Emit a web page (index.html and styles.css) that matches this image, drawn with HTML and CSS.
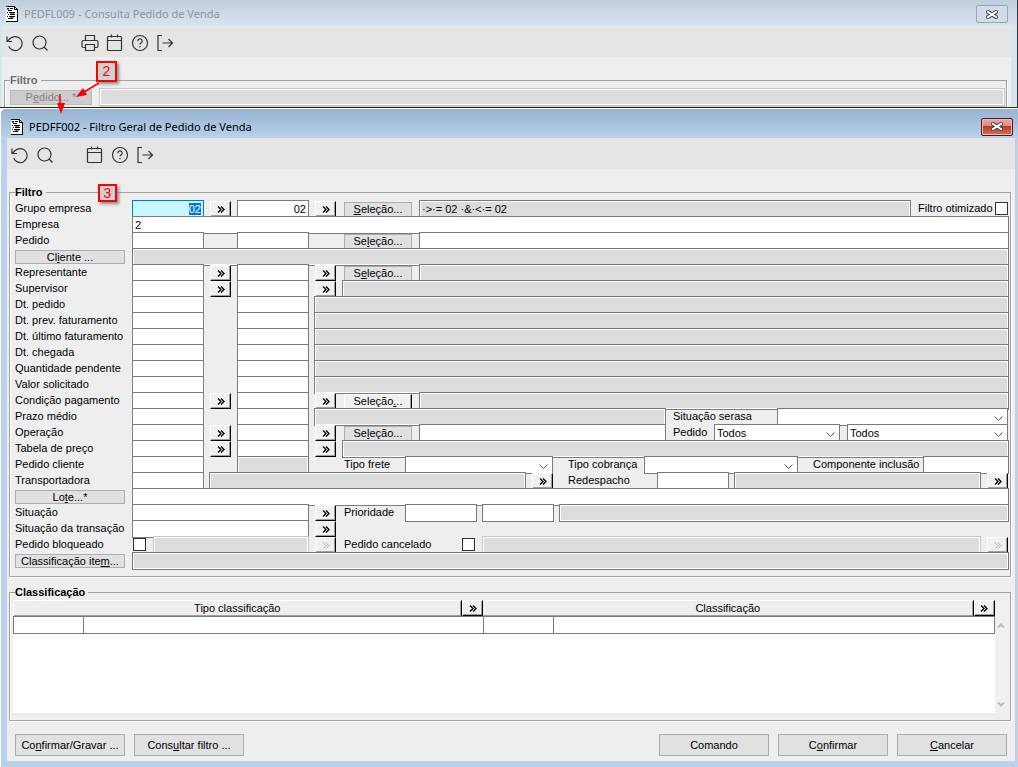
FILE: index.html
```html
<!DOCTYPE html>
<html lang="pt-BR">
<head>
  <meta charset="UTF-8">
  <meta name="viewport" content="width=device-width, initial-scale=1.0">
  <title>PEDFF002 - Filtro Geral de Pedido de Venda</title>
  <link rel="stylesheet" href="styles.css">
</head>
<body>
  <!-- icons -->
  <svg class="sprite" aria-hidden="true">
    <symbol id="i-doc" viewBox="0 0 12 16">
      <path d="M0 0h9l3 3v13H0z" fill="#fff"/>
      <path d="M0 15h12v1H0zM11 3h1v13h-1zM8 0h1v3H8zM8 3h4v1H8zM9 1h1v1H9zM10 2h1v1h-1zM0 0h9v1H0z" fill="#000"/>
      <path d="M1 2h2v1H1zM4 2h3v1H4zM2 4h4v1H2zM1 6h1v1H1zM3 6h6v1H3zM2 8h1v1H2zM4 8h5v1H4zM1 10h1v1H1zM3 10h6v1H3zM2 12h5v1H2z" fill="#000"/>
      <path d="M1 3h2v1H1zM4 7h4v1H4zM4 11h4v1H4z" fill="#777"/>
    </symbol>
    <symbol id="i-undo" viewBox="0 0 18 18"><path d="M1 2.500v5h5M1 7.500l3.500-3.200a7 7 0 1 1-1.800 8"/></symbol>
    <symbol id="i-search" viewBox="0 0 18 18"><circle cx="8.500" cy="8.500" r="6.500"/><path d="M13 13l3.500 3.500"/></symbol>
    <symbol id="i-print" viewBox="0 0 18 18"><path d="M4.500 6.500v-5h9v5M4.500 13.500h-2a1.500 1.500 0 0 1-1.500-1.500V8a1.500 1.500 0 0 1 1.500-1.500h13A1.500 1.500 0 0 1 17 8v4a1.500 1.500 0 0 1-1.500 1.500h-2M4.500 10.500h9v6h-9z"/></symbol>
    <symbol id="i-cal" viewBox="0 0 18 18"><rect x="1.500" y="2.500" width="14" height="14" rx="1"/><path d="M1.500 6.500h14M5.500 .5v3M11.500 .5v3"/></symbol>
    <symbol id="i-help" viewBox="0 0 18 18"><circle cx="9" cy="9" r="7.500"/><path d="M6.800 7.200a2.200 2.200 0 1 1 3.300 1.700q-1.100 .6-1.100 1.600M9 12v1.200"/></symbol>
    <symbol id="i-exit" viewBox="0 0 18 18"><path d="M6 1.500H2v15h4M6.500 9h10M12.500 5l4 4-4 4"/></symbol>
    <symbol id="i-more" viewBox="0 0 8 7"><path d="M1 .5l3 3-3 3M4 .5l3 3-3 3"/></symbol>
    <symbol id="i-close" viewBox="0 0 12 9"><path d="M2 2l8 5M10 2l-8 5" stroke="#41454f" stroke-width="4" stroke-linecap="square"/><path d="M2 2l8 5M10 2l-8 5" stroke="#fff" stroke-width="2" stroke-linecap="square"/></symbol>
  </svg>

  <!-- back window -->
  <section class="win win-back">
    <header class="titlebar">
      <svg class="doc"><use href="#i-doc"/></svg>
      <h1>PEDFL009 - Consulta Pedido de Venda</h1>
      <button class="close" aria-label="Fechar"><svg><use href="#i-close"/></svg></button>
    </header>
    <div class="client">
      <nav class="toolbar">
        <button aria-label="Desfazer"><svg><use href="#i-undo"/></svg></button>
        <button aria-label="Pesquisar"><svg><use href="#i-search"/></svg></button>
        <button class="apart" aria-label="Imprimir"><svg><use href="#i-print"/></svg></button>
        <button aria-label="Agenda"><svg><use href="#i-cal"/></svg></button>
        <button aria-label="Ajuda"><svg><use href="#i-help"/></svg></button>
        <button aria-label="Sair"><svg><use href="#i-exit"/></svg></button>
      </nav>
      <fieldset class="group">
        <legend>Filtro</legend>
        <div class="row">
          <button class="btn btn-back" disabled>P<u>e</u>dido... *</button>
          <input class="ro soft grow" readonly aria-label="Pedido">
        </div>
        <div class="row strip"><span></span><span></span><span></span><span></span></div>
      </fieldset>
    </div>
  </section>

  <!-- front window -->
  <section class="win win-front">
    <header class="titlebar">
      <svg class="doc"><use href="#i-doc"/></svg>
      <h1>PEDFF002 - Filtro Geral de Pedido de Venda</h1>
      <button class="close" aria-label="Fechar"><svg><use href="#i-close"/></svg></button>
    </header>
    <div class="client">
      <nav class="toolbar">
        <button aria-label="Desfazer"><svg><use href="#i-undo"/></svg></button>
        <button aria-label="Pesquisar"><svg><use href="#i-search"/></svg></button>
        <button class="apart" aria-label="Agenda"><svg><use href="#i-cal"/></svg></button>
        <button aria-label="Ajuda"><svg><use href="#i-help"/></svg></button>
        <button aria-label="Sair"><svg><use href="#i-exit"/></svg></button>
      </nav>

      <form>
        <fieldset class="group">
          <legend>Filtro</legend>

          <div class="row">
            <label class="name" for="grupo">Grupo empresa</label>
            <input class="num focused" id="grupo" value="02">
            <span class="slot"><button type="button" class="more" aria-label="Buscar"><svg><use href="#i-more"/></svg></button></span>
            <input class="num" value="02" aria-label="Grupo empresa até">
            <span class="slot"><button type="button" class="more" aria-label="Buscar"><svg><use href="#i-more"/></svg></button></span>
            <span class="pick"><button type="button" class="btn"><u>S</u>eleção...</button></span>
            <input class="ro grow" readonly value="·&gt;·= 02 ·&amp;·&lt;·= 02" aria-label="Seleção de grupo">
            <label class="check" for="otim">Filtro otimizado</label>
            <input type="checkbox" id="otim">
          </div>
          <div class="row">
            <label class="name" for="empresa">Empresa</label>
            <input class="grow" id="empresa" value="2">
          </div>
          <div class="row">
            <label class="name" for="pedido">Pedido</label>
            <input class="num" id="pedido"><span class="slot"></span>
            <input class="num" aria-label="Pedido até"><span class="slot"></span>
            <span class="pick"><button type="button" class="btn">Se<u>l</u>eção...</button></span>
            <input class="grow" aria-label="Seleção de pedido">
          </div>
          <div class="row">
            <span class="name"><button type="button" class="btn">Cl<u>i</u>ente ...</button></span>
            <input class="ro grow" readonly aria-label="Cliente">
          </div>
          <div class="row">
            <label class="name" for="repr">Representante</label>
            <input class="num" id="repr">
            <span class="slot"><button type="button" class="more" aria-label="Buscar"><svg><use href="#i-more"/></svg></button></span>
            <input class="num" aria-label="Representante até">
            <span class="slot"><button type="button" class="more" aria-label="Buscar"><svg><use href="#i-more"/></svg></button></span>
            <span class="pick"><button type="button" class="btn">S<u>e</u>leção...</button></span>
            <input class="ro grow" readonly aria-label="Seleção de representante">
          </div>
          <div class="row">
            <label class="name" for="superv">Supervisor</label>
            <input class="num" id="superv">
            <span class="slot"><button type="button" class="more" aria-label="Buscar"><svg><use href="#i-more"/></svg></button></span>
            <input class="num" aria-label="Supervisor até">
            <span class="slot"><button type="button" class="more" aria-label="Buscar"><svg><use href="#i-more"/></svg></button></span>
            <input class="ro grow" readonly aria-label="Nome do supervisor">
          </div>
          <div class="row">
            <label class="name" for="dtped">Dt. pedido</label>
            <input class="num" id="dtped"><span class="slot"></span>
            <input class="num" aria-label="Dt. pedido até"><input class="ro grow wide" readonly aria-label="Período">
          </div>
          <div class="row">
            <label class="name" for="dtprev">Dt. prev. faturamento</label>
            <input class="num" id="dtprev"><span class="slot"></span>
            <input class="num" aria-label="Dt. prev. faturamento até"><input class="ro grow wide" readonly aria-label="Período">
          </div>
          <div class="row">
            <label class="name" for="dtult">Dt. último faturamento</label>
            <input class="num" id="dtult"><span class="slot"></span>
            <input class="num" aria-label="Dt. último faturamento até"><input class="ro grow wide" readonly aria-label="Período">
          </div>
          <div class="row">
            <label class="name" for="dtcheg">Dt. chegada</label>
            <input class="num" id="dtcheg"><span class="slot"></span>
            <input class="num" aria-label="Dt. chegada até"><input class="ro grow wide" readonly aria-label="Período">
          </div>
          <div class="row">
            <label class="name" for="qtd">Quantidade pendente</label>
            <input class="num" id="qtd"><span class="slot"></span>
            <input class="num" aria-label="Quantidade até"><input class="ro grow wide" readonly aria-label="Faixa">
          </div>
          <div class="row">
            <label class="name" for="valor">Valor solicitado</label>
            <input class="num" id="valor"><span class="slot"></span>
            <input class="num" aria-label="Valor até"><input class="ro grow wide" readonly aria-label="Faixa">
          </div>
          <div class="row">
            <label class="name" for="cond">Condição pagamento</label>
            <input class="num" id="cond">
            <span class="slot"><button type="button" class="more" aria-label="Buscar"><svg><use href="#i-more"/></svg></button></span>
            <input class="num" aria-label="Condição até">
            <span class="slot"><button type="button" class="more" aria-label="Buscar"><svg><use href="#i-more"/></svg></button></span>
            <span class="pick"><button type="button" class="btn raised">Seleção<u>.</u>..</button></span>
            <input class="ro grow" readonly aria-label="Seleção de condição">
          </div>
          <div class="row">
            <label class="name" for="prazo">Prazo médio</label>
            <input class="num" id="prazo"><span class="slot"></span>
            <input class="num" aria-label="Prazo até"><input class="ro grow wide" readonly aria-label="Faixa">
            <div class="side">
              <label class="lead serasa" for="serasa">Situação serasa</label>
              <select class="grow" id="serasa"><option></option></select>
            </div>
          </div>
          <div class="row">
            <label class="name" for="oper">Operação</label>
            <input class="num" id="oper">
            <span class="slot"><button type="button" class="more" aria-label="Buscar"><svg><use href="#i-more"/></svg></button></span>
            <input class="num" aria-label="Operação até">
            <span class="slot"><button type="button" class="more" aria-label="Buscar"><svg><use href="#i-more"/></svg></button></span>
            <span class="pick"><button type="button" class="btn">Se<u>l</u>eção...</button></span>
            <input class="grow" aria-label="Seleção de operação">
            <div class="side">
              <label class="lead ped" for="tipoped">Pedido</label>
              <select class="ped-a" id="tipoped"><option>Todos</option></select>
              <select class="grow gap" aria-label="Situação do pedido"><option>Todos</option></select>
            </div>
          </div>
          <div class="row">
            <label class="name" for="tabela">Tabela de preço</label>
            <input class="num" id="tabela">
            <span class="slot"><button type="button" class="more" aria-label="Buscar"><svg><use href="#i-more"/></svg></button></span>
            <input class="num" aria-label="Tabela até">
            <span class="slot"><button type="button" class="more" aria-label="Buscar"><svg><use href="#i-more"/></svg></button></span>
            <input class="ro grow" readonly aria-label="Nome da tabela">
          </div>
          <div class="row">
            <label class="name" for="pedcli">Pedido cliente</label>
            <input class="num" id="pedcli"><span class="slot"></span>
            <input class="num ro" readonly aria-label="Pedido cliente até"><span class="slot"></span>
            <label class="mid" for="frete">Tipo frete</label>
            <select class="frete" id="frete"><option></option></select>
            <label class="lead cobr" for="cobr">Tipo cobrança</label>
            <select class="grow" id="cobr"><option></option></select>
            <label class="lead comp" for="comp">Componente inclusão</label>
            <input class="comp-in" id="comp">
          </div>
          <div class="row">
            <label class="name" for="transp">Transportadora</label>
            <input class="num" id="transp">
            <input class="ro wide transp" readonly aria-label="Nome da transportadora">
            <span class="slot"><button type="button" class="more" aria-label="Buscar"><svg><use href="#i-more"/></svg></button></span>
            <label class="redesp" for="redesp">Redespacho</label>
            <input class="num" id="redesp">
            <input class="ro grow wide" readonly aria-label="Nome do redespacho">
            <span class="end"><button type="button" class="more" aria-label="Buscar"><svg><use href="#i-more"/></svg></button></span>
          </div>
          <div class="row">
            <span class="name"><button type="button" class="btn">Lo<u>t</u>e...*</button></span>
            <input class="grow" aria-label="Lote">
          </div>
          <div class="row">
            <label class="name" for="sit">Situação</label>
            <input class="double" id="sit">
            <span class="slot"><button type="button" class="more" aria-label="Buscar"><svg><use href="#i-more"/></svg></button></span>
            <label class="mid" for="prio">Prioridade</label>
            <input class="num" id="prio">
            <input class="num wide" aria-label="Prioridade até">
            <input class="ro grow wide" readonly aria-label="Faixa de prioridade">
          </div>
          <div class="row">
            <label class="name" for="sittr">Situação da transação</label>
            <input class="double" id="sittr">
            <span class="slot"><button type="button" class="more" aria-label="Buscar"><svg><use href="#i-more"/></svg></button></span>
          </div>
          <div class="row">
            <label class="name" for="bloq">Pedido bloqueado</label>
            <span class="tick"><input type="checkbox" id="bloq"></span>
            <input class="ro soft bloq" readonly aria-label="Motivo do bloqueio">
            <span class="slot"><button type="button" class="more" disabled aria-label="Buscar"><svg><use href="#i-more"/></svg></button></span>
            <label class="cancel" for="canc">Pedido cancelado</label>
            <span class="tick"><input type="checkbox" id="canc"></span>
            <input class="ro soft grow" readonly aria-label="Motivo do cancelamento">
            <span class="end"><button type="button" class="more" disabled aria-label="Buscar"><svg><use href="#i-more"/></svg></button></span>
          </div>
          <div class="row">
            <span class="name"><button type="button" class="btn">Classificação ite<u>m</u>...</button></span>
            <input class="ro grow" readonly aria-label="Classificação item">
          </div>
        </fieldset>

        <fieldset class="group classes">
          <legend>Classificação</legend>
          <div class="list">
            <table>
              <colgroup><col class="c-code"><col><col class="c-code"><col class="c-desc"></colgroup>
              <thead>
                <tr>
                  <th colspan="2"><div class="head"><span>Tipo classificação</span><button type="button" class="more" aria-label="Buscar"><svg><use href="#i-more"/></svg></button></div></th>
                  <th colspan="2"><div class="head"><span>Classificação</span><button type="button" class="more" aria-label="Buscar"><svg><use href="#i-more"/></svg></button></div></th>
                </tr>
              </thead>
              <tbody>
                <tr><td></td><td></td><td></td><td></td></tr>
              </tbody>
            </table>
            <div class="scroll">
              <svg viewBox="0 0 8 5"><path d="M1 4.500l3-3 3 3"/></svg>
              <svg viewBox="0 0 8 5"><path d="M1 .5l3 3 3-3"/></svg>
            </div>
          </div>
        </fieldset>

        <footer class="actions">
          <button type="button" class="btn">Co<u>n</u>firmar/Gravar ...</button>
          <button type="button" class="btn">Cons<u>u</u>ltar filtro ...</button>
          <button type="button" class="btn push">Comando</button>
          <button type="button" class="btn">C<u>o</u>nfirmar</button>
          <button type="button" class="btn"><u>C</u>ancelar</button>
        </footer>
      </form>
    </div>
  </section>

  <!-- step markers over the windows -->
  <div class="step step-2">2</div>
  <div class="step step-3">3</div>
  <svg class="arrows" viewBox="0 0 60 40" aria-hidden="true">
    <path d="M49 4L34 13M10 15v10" stroke="#f00" stroke-width="1.500"/>
    <path d="M26 18l7-9 4 7zM7 24h8l-4 11z" fill="#f00"/>
  </svg>

  <script>
    // first field starts focused with its value selected
    const grupo = document.getElementById('grupo');
    grupo.focus();
    grupo.select();
  </script>
</body>
</html>
```
FILE: styles.css
```css
* {
  box-sizing: border-box;
}
body {
  margin: 0;
  min-height: 100vh;
  display: flex;
  flex-direction: column;
  background: #fff;
  color: #000;
  font: 11px/15px "Liberation Sans", Arial, sans-serif;
}
button, input, select {
  margin: 0;
  font: inherit;
  color: inherit;
  border-radius: 0;
}
u {
  text-underline-offset: 1px;
}
.sprite {
  position: absolute;
  width: 0;
  height: 0;
}

/* windows */
.win-back {
  height: 108px;
  overflow: hidden;
  padding: 0 6px 0 2px;
  background: #d7e4f2;
  border-right: 1px solid #3a3a40;
  border-bottom: 1px solid #26262c;
}
.win-front {
  flex: 1;
  display: flex;
  flex-direction: column;
  padding: 0 3px 6px 6px;
  margin-left: 1px;
  background: #b9d1ea;
  border-top: 1px solid #fff;
  border-radius: 5px 0 0 0;
}
.titlebar {
  display: flex;
  align-items: center;
  height: 26px;
  margin: 0 -6px 0 -2px;
  padding: 2px 9px 0 6px;
  background: linear-gradient(#c0cddb, #d7e4f2);
}
.titlebar h1 {
  flex: 1;
  margin: 0 0 0 6px;
  font: 11px/16px "Noto Sans", "Open Sans", sans-serif;
}
.win-back h1 {
  color: #8f959c;
}
.win-front .titlebar {
  height: 29px;
  margin: 0 -3px 0 -6px;
  padding: 6px 5px 0 10px;
  background: linear-gradient(#98b4d2, #b9d1ea);
  border-radius: 5px 0 0 0;
}
.doc {
  width: 12px;
  height: 16px;
}
.close {
  display: flex;
  align-items: center;
  justify-content: center;
  width: 32px;
  height: 18px;
  padding: 0;
  border: 1px solid #98a3b0;
  border-radius: 2px;
  background: #d0dcea;
}
.close svg {
  flex: none;
  width: 12px;
  height: 9px;
}
.win-front .close {
  border-color: #4c1a1e;
  background: linear-gradient(#eaa69c, #d98c80 45%, #b93a22 46%, #d4705c);
  box-shadow: inset 0 0 0 1px #f0b8ae;
}
.client {
  flex: 1;
  background: #eee;
}
.toolbar {
  display: flex;
  align-items: center;
  gap: 7px;
  height: 31px;
  padding: 3px 0 0 4px;
  background: #e5e5e5;
}
.toolbar button {
  width: 18px;
  height: 18px;
  padding: 0;
  border: 0;
  background: none;
}
.toolbar .apart {
  margin-left: 25px;
}
.toolbar svg {
  display: block;
  width: 18px;
  height: 18px;
  fill: none;
  stroke: #333;
  stroke-width: 1.2;
}

/* groups and rows */
.group {
  position: relative;
  min-width: 0;
  margin: 16px 4px 0 2px;
  padding: 0 1px 8px 5px;
  border: 1px solid #a0a0a0;
  box-shadow: 1px 1px 0 #fff, inset 1px 0 0 #fff;
}
.group legend {
  height: 15px;
  padding: 0 3px 0 0;
  font-weight: bold;
}
.row {
  display: flex;
  height: 16px;
}
.name {
  flex: none;
  width: 117px;
  padding-top: 1px;
  white-space: nowrap;
}
.row input, .row select {
  flex: none;
  height: 18px;
  padding: 0 2px;
  border: 1px solid #7a7a7a;
  background: #fff;
  outline: 0;
}
.row .grow {
  flex: 1;
  min-width: 0;
}
.row .num {
  width: 72px;
  text-align: right;
}
.row .double {
  width: 177px;
}
.row .ro {
  background: #dcdcdc;
  box-shadow: inset 0 0 0 1px #fff;
}
.row .soft {
  border-color: #c8c8c8;
}
.row .wide {
  margin-left: 5px;
}
.row .focused {
  border-color: #0078d7;
  background: #c8f8ff;
}
.focused::selection {
  background: #0078d7;
  color: #fff;
}
.row input[type="checkbox"] {
  appearance: none;
  width: 13px;
  height: 13px;
  margin: 2px 1px 0;
  padding: 0;
  border-color: #333;
}
.slot {
  flex: none;
  width: 33px;
  padding: 1px 6px 0;
}
.pick {
  flex: none;
  width: 77px;
  padding: 2px 7px 0 2px;
}
.end {
  flex: none;
  width: 28px;
  padding: 1px 1px 0 6px;
}
.tick {
  flex: none;
  width: 21px;
}
.check {
  flex: none;
  width: 83px;
  padding: 1px 0 0 7px;
  white-space: nowrap;
}
.side {
  flex: none;
  display: flex;
  width: 343px;
  padding-right: 1px;
}
.lead, .mid, .redesp, .cancel {
  flex: none;
  padding-top: 1px;
}
.lead {
  padding-left: 7px;
}
.serasa {
  width: 111px;
}
.ped {
  width: 48px;
}
.row .ped-a {
  width: 126px;
}
.row .gap {
  margin-left: 7px;
}
.mid {
  width: 63px;
  padding-left: 2px;
}
.row .frete {
  width: 148px;
}
.cobr {
  width: 91px;
  padding-left: 15px;
}
.comp {
  width: 125px;
  padding-left: 15px;
}
.row .comp-in {
  width: 86px;
}
.row .transp {
  width: 317px;
}
.redesp {
  width: 98px;
  padding-left: 9px;
}
.row .bloq {
  width: 156px;
}
.cancel {
  width: 119px;
  padding-left: 2px;
}
.row select {
  appearance: none;
  background: #fff url("data:image/svg+xml,%3Csvg xmlns='http://www.w3.org/2000/svg' width='9' height='6'%3E%3Cpath d='M.5 .5l4 4 4-4' fill='none' stroke='%23555'/%3E%3C/svg%3E") no-repeat right 4px top 7px;
}

/* buttons */
.btn {
  display: block;
  width: 100%;
  height: 15px;
  padding: 0;
  border: 1px solid #adadad;
  background: #e1e1e1;
  line-height: 13px;
  text-align: center;
}
.name .btn {
  width: 110px;
  height: 14px;
  margin-top: 1px;
  line-height: 12px;
}
.raised {
  border-color: #fff #000 #fff #fff;
  background: #f0f0f0;
  box-shadow: inset -1px 0 0 #a0a0a0;
}
.more {
  display: flex;
  align-items: center;
  justify-content: center;
  flex: none;
  width: 21px;
  height: 16px;
  padding: 0;
  border: 1px solid;
  border-color: #fff #000 #000 #fff;
  background: #f0f0f0;
  box-shadow: inset -1px -1px 0 #a0a0a0;
}
.more svg {
  flex: none;
  width: 8px;
  height: 7px;
  fill: none;
  stroke: #000;
  stroke-width: 1.3;
}
.more:disabled svg {
  stroke: #aaa;
  stroke-dasharray: 1 1;
}

/* back window contents */
.win-back .group {
  color: #6e6e6e;
}
.btn-back {
  flex: none;
  width: 82px;
  margin: 2px 7px 0 0;
  border-color: #bbb;
  background: #ccc;
  color: #858585;
}
.strip {
  height: 20px;
  padding-left: 90px;
}
.strip span {
  width: 78px;
  margin-top: 2px;
  border-top: 1px solid #c8c8c8;
  border-left: 1px solid #c8c8c8;
  background: #fff;
}
.strip span:first-child {
  width: 307px;
}
.strip span:last-child {
  flex: 1;
}

/* classification list */
.classes {
  margin-top: 8px;
  padding: 0 2px 7px 3px;
}
.classes legend {
  margin-left: 2px;
}
.list {
  display: flex;
  height: 113px;
  background: #fff;
}
.list table {
  flex: 1;
  height: 34px;
  border-collapse: collapse;
  table-layout: fixed;
}
.c-code {
  width: 70px;
}
.c-desc {
  width: 45%;
}
.list th {
  height: 16px;
  padding: 0;
  font-weight: normal;
}
.list td {
  height: 17px;
  padding: 0;
  border: 1px solid #7a7a7a;
}
.head {
  display: flex;
  height: 16px;
  background: #eee;
}
.head span {
  flex: 1;
  border-top: 1px solid #fff;
  border-right: 1px solid #000;
  box-shadow: inset -1px -1px 0 #a0a0a0;
}
.scroll {
  display: flex;
  flex-direction: column;
  justify-content: space-between;
  width: 13px;
  padding: 23px 2px 6px;
  background: #f0f0f0;
}
.scroll svg {
  width: 8px;
  height: 5px;
  fill: none;
  stroke: #bbb;
  stroke-width: 2;
}
.actions {
  display: flex;
  gap: 9px;
  padding: 13px 8px 5px;
}
.actions .btn {
  width: 110px;
  height: 22px;
  line-height: 20px;
}
.actions .push {
  margin-left: auto;
}

/* step markers */
.step {
  position: absolute;
  border: 2px solid #f00;
  background: #d0d0d0;
  box-shadow: 2px 2px 3px #888;
  color: #f00;
  font-size: 14px;
  text-align: center;
}
.step-2 {
  left: 96px;
  top: 61px;
  width: 21px;
  height: 21px;
  line-height: 17px;
}
.step-3 {
  left: 98px;
  top: 184px;
  width: 19px;
  height: 18px;
  line-height: 15px;
}
.arrows {
  position: absolute;
  left: 50px;
  top: 79px;
  width: 60px;
  height: 40px;
}
```
